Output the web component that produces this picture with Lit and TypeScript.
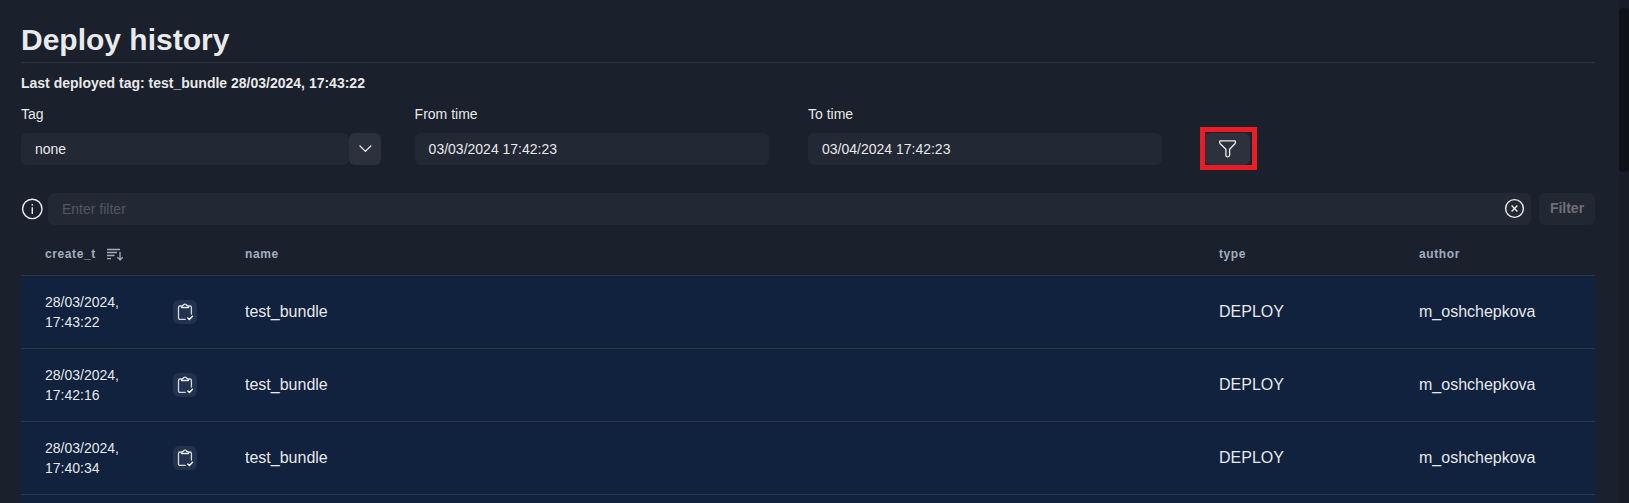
import { LitElement, html, css, svg } from "lit";
import { customElement, property } from "lit/decorators.js";

const clipboard = svg`
  <svg width="20" height="20" viewBox="0 0 20 20" fill="none" stroke-linecap="round" stroke-linejoin="round">
    <path d="M5.9 4H5a1.5 1.5 0 0 0-1.5 1.5v10.4A1.5 1.5 0 0 0 5 17.4h5.2" stroke="#d3d8df" stroke-width="1.3"/>
    <path d="M14 4h.9a1.5 1.5 0 0 1 1.5 1.5V12" stroke="#d3d8df" stroke-width="1.3"/>
    <path d="M6.5 5.5V4.2L8.2 3.4a1.9 1.9 0 0 1 3.6 0l1.7.8v1.3z" stroke="#e3e7ec" stroke-width="1.3"/>
    <path d="M12.8 15.9l1.6 1.5 3.1-3.2" stroke="#fff" stroke-width="1.4"/>
  </svg>`;

@customElement("history-row")
class HistoryRow extends LitElement {
  @property() day = "";
  @property() time = "";
  @property() name = "";
  @property() type = "";
  @property() author = "";

  static styles = css`
    :host {
      display: grid;
      grid-template-columns: 200px 1fr 200px 200px;
      align-items: center;
      box-sizing: border-box;
      height: 73px;
      flex: none;
      background: #11223e;
      border-bottom: 1px solid #2d3747;
      font-size: 16px;
    }
    .cell { padding: 0 0 2px 24px; }
    .created {
      display: flex;
      align-items: center;
      justify-content: space-between;
      padding: 0 24px;
      font-size: 14px;
      line-height: 20px;
    }
    .copy {
      display: flex;
      align-items: center;
      justify-content: center;
      width: 24px;
      height: 24px;
      border-radius: 6px;
      background: rgba(255, 255, 255, 0.08);
    }
    svg { display: block; }
  `;

  render() {
    return html`
      <div class="created">
        <div>${this.day}<br />${this.time}</div>
        <div class="copy">${clipboard}</div>
      </div>
      <div class="cell">${this.name}</div>
      <div class="cell">${this.type}</div>
      <div class="cell">${this.author}</div>
    `;
  }
}

@customElement("app-root")
class AppRoot extends LitElement {
  static styles = css`
    :host {
      display: flex;
      height: 503px;
      overflow: hidden;
      background: #1b212c;
      color: rgba(255, 255, 255, 0.92);
      font-family: "Liberation Sans", Arial, sans-serif;
      font-size: 14px;
      line-height: 21px;
    }
    svg { display: block; }
    .page {
      flex: 1;
      min-width: 0;
      display: flex;
      flex-direction: column;
      padding: 20px 24px 0 21px;
    }
    h1 {
      margin: 0;
      height: 42px;
      line-height: 40px;
      font-size: 30px;
      flex: none;
      border-bottom: 1px solid #2d3340;
    }
    .last { font-weight: 700; margin-top: 10px; }
    .controls { display: flex; margin-top: 10px; align-items: flex-end; }
    .field { display: flex; flex-direction: column; gap: 8px; }
    .tag { width: 360px; margin-right: 33.6px; }
    .from { width: 354px; margin-right: 39.4px; }
    .to { width: 354px; margin-right: 43px; }
    .pick { display: flex; }
    .input {
      flex: 1;
      box-sizing: border-box;
      height: 32px;
      line-height: 32px;
      padding: 0 14px;
      border-radius: 6px;
      background: #232934;
    }
    .date .input { flex: none; }
    .pick .input { flex: none; width: 328px; }
    .btn {
      display: flex;
      align-items: center;
      justify-content: center;
      width: 32px;
      height: 32px;
      border-radius: 6px;
      background: #2c323d;
    }
    .funnel { position: relative; width: 45px; }
    .mark {
      position: absolute;
      inset: -6px -7px -5px -5px;
      border: 5px solid #ec1c24;
    }
    .search { display: flex; align-items: center; margin-top: 28px; }
    .info { width: 22px; margin-right: 5px; }
    .query {
      display: flex;
      align-items: center;
      justify-content: space-between;
      padding-right: 6px;
      margin-right: 8px;
      color: #525761;
    }
    .apply {
      width: 56px;
      font-weight: 700;
      line-height: 30px;
      height: 32px;
      text-align: center;
      border-radius: 6px;
      background: #222832;
      color: #6c7077;
    }
    .head {
      display: grid;
      grid-template-columns: 200px 1fr 200px 200px;
      box-sizing: border-box;
      height: 51px;
      flex: none;
      padding-top: 21px;
      border-bottom: 1px solid #2d3747;
      color: #a0aec0;
      font-size: 12px;
      font-weight: 700;
      line-height: 16px;
      letter-spacing: 0.6px;
    }
    .head div { padding-left: 24px; display: flex; gap: 10px; }
    .track { width: 10px; background: #181c27; padding-top: 8px; }
    .thumb { height: 164px; border-radius: 4px; background: #0e1118; }
  `;

  private rows = [
    ["28/03/2024,", "17:43:22"],
    ["28/03/2024,", "17:42:16"],
    ["28/03/2024,", "17:40:34"],
    ["", ""],
  ];

  render() {
    return html`
      <div class="page">
        <h1>Deploy history</h1>
        <div class="last">Last deployed tag: test_bundle 28/03/2024, 17:43:22</div>
        <div class="controls">
          <div class="field tag">
            <label>Tag</label>
            <div class="pick">
              <div class="input">none</div>
              <div class="btn">
                <svg width="14" height="10" viewBox="0 0 14 10" fill="none" stroke="#eceded" stroke-width="1.3" stroke-linecap="round" stroke-linejoin="round"><path d="M2 2l5.4 5.4L12.8 2"/></svg>
              </div>
            </div>
          </div>
          <div class="field date from"><label>From time</label><div class="input">03/03/2024 17:42:23</div></div>
          <div class="field date to"><label>To time</label><div class="input">03/04/2024 17:42:23</div></div>
          <div class="btn funnel">
            <svg width="19" height="18" viewBox="0 0 19 18" fill="none" stroke="#eceded" stroke-width="1.3" stroke-linejoin="round"><path d="M2.1 .9h14.8c.3 0 .5.2.5.5v1.2c0 .4-.2.8-.5 1.1l-5.3 5.5v6.1c0 .9-.8 1.5-1.8 1.5s-1.9-.5-1.9-1.5V9.2L2.2 3.7c-.3-.3-.5-.7-.5-1.1V1.4c0-.3.2-.5.4-.5z"/></svg>
            <div class="mark"></div>
          </div>
        </div>
        <div class="search">
          <svg class="info" width="22" height="22" viewBox="0 0 22 22" fill="none" stroke="#eceded" stroke-width="1.4"><circle cx="11.3" cy="10.9" r="9.7"/><path d="M11.3 9.3v6.6"/><path d="M11.3 6v1.5"/></svg>
          <div class="input query">
            <span>Enter filter</span>
            <svg width="22" height="22" viewBox="0 0 22 22" fill="none" stroke="#eceded" stroke-width="1.4"><circle cx="11.5" cy="10.5" r="8.9"/><path d="M8.6 7.6l5.8 5.8M14.4 7.6l-5.8 5.8"/></svg>
          </div>
          <div class="apply">Filter</div>
        </div>
        <div class="head">
          <div>
            create_t
            <svg width="18" height="16" viewBox="0 0 18 16" fill="none" stroke="#a0aec0" stroke-width="1.3"><path d="M1 3.5h13M1 6.5h10M1 9.5h7.5M1 12.7h4M14 6v7.6M11.4 11.2l2.7 2.7 2.7-2.7"/></svg>
          </div>
          <div>name</div>
          <div>type</div>
          <div>author</div>
        </div>
        ${this.rows.map(([d, t]) =>
          d
            ? html`<history-row .day=${d} .time=${t} .name=${"test_bundle"} .type=${"DEPLOY"} .author=${"m_oshchepkova"}></history-row>`
            : html`<history-row></history-row>`
        )}
      </div>
      <div class="track"><div class="thumb"></div></div>
    `;
  }
}
